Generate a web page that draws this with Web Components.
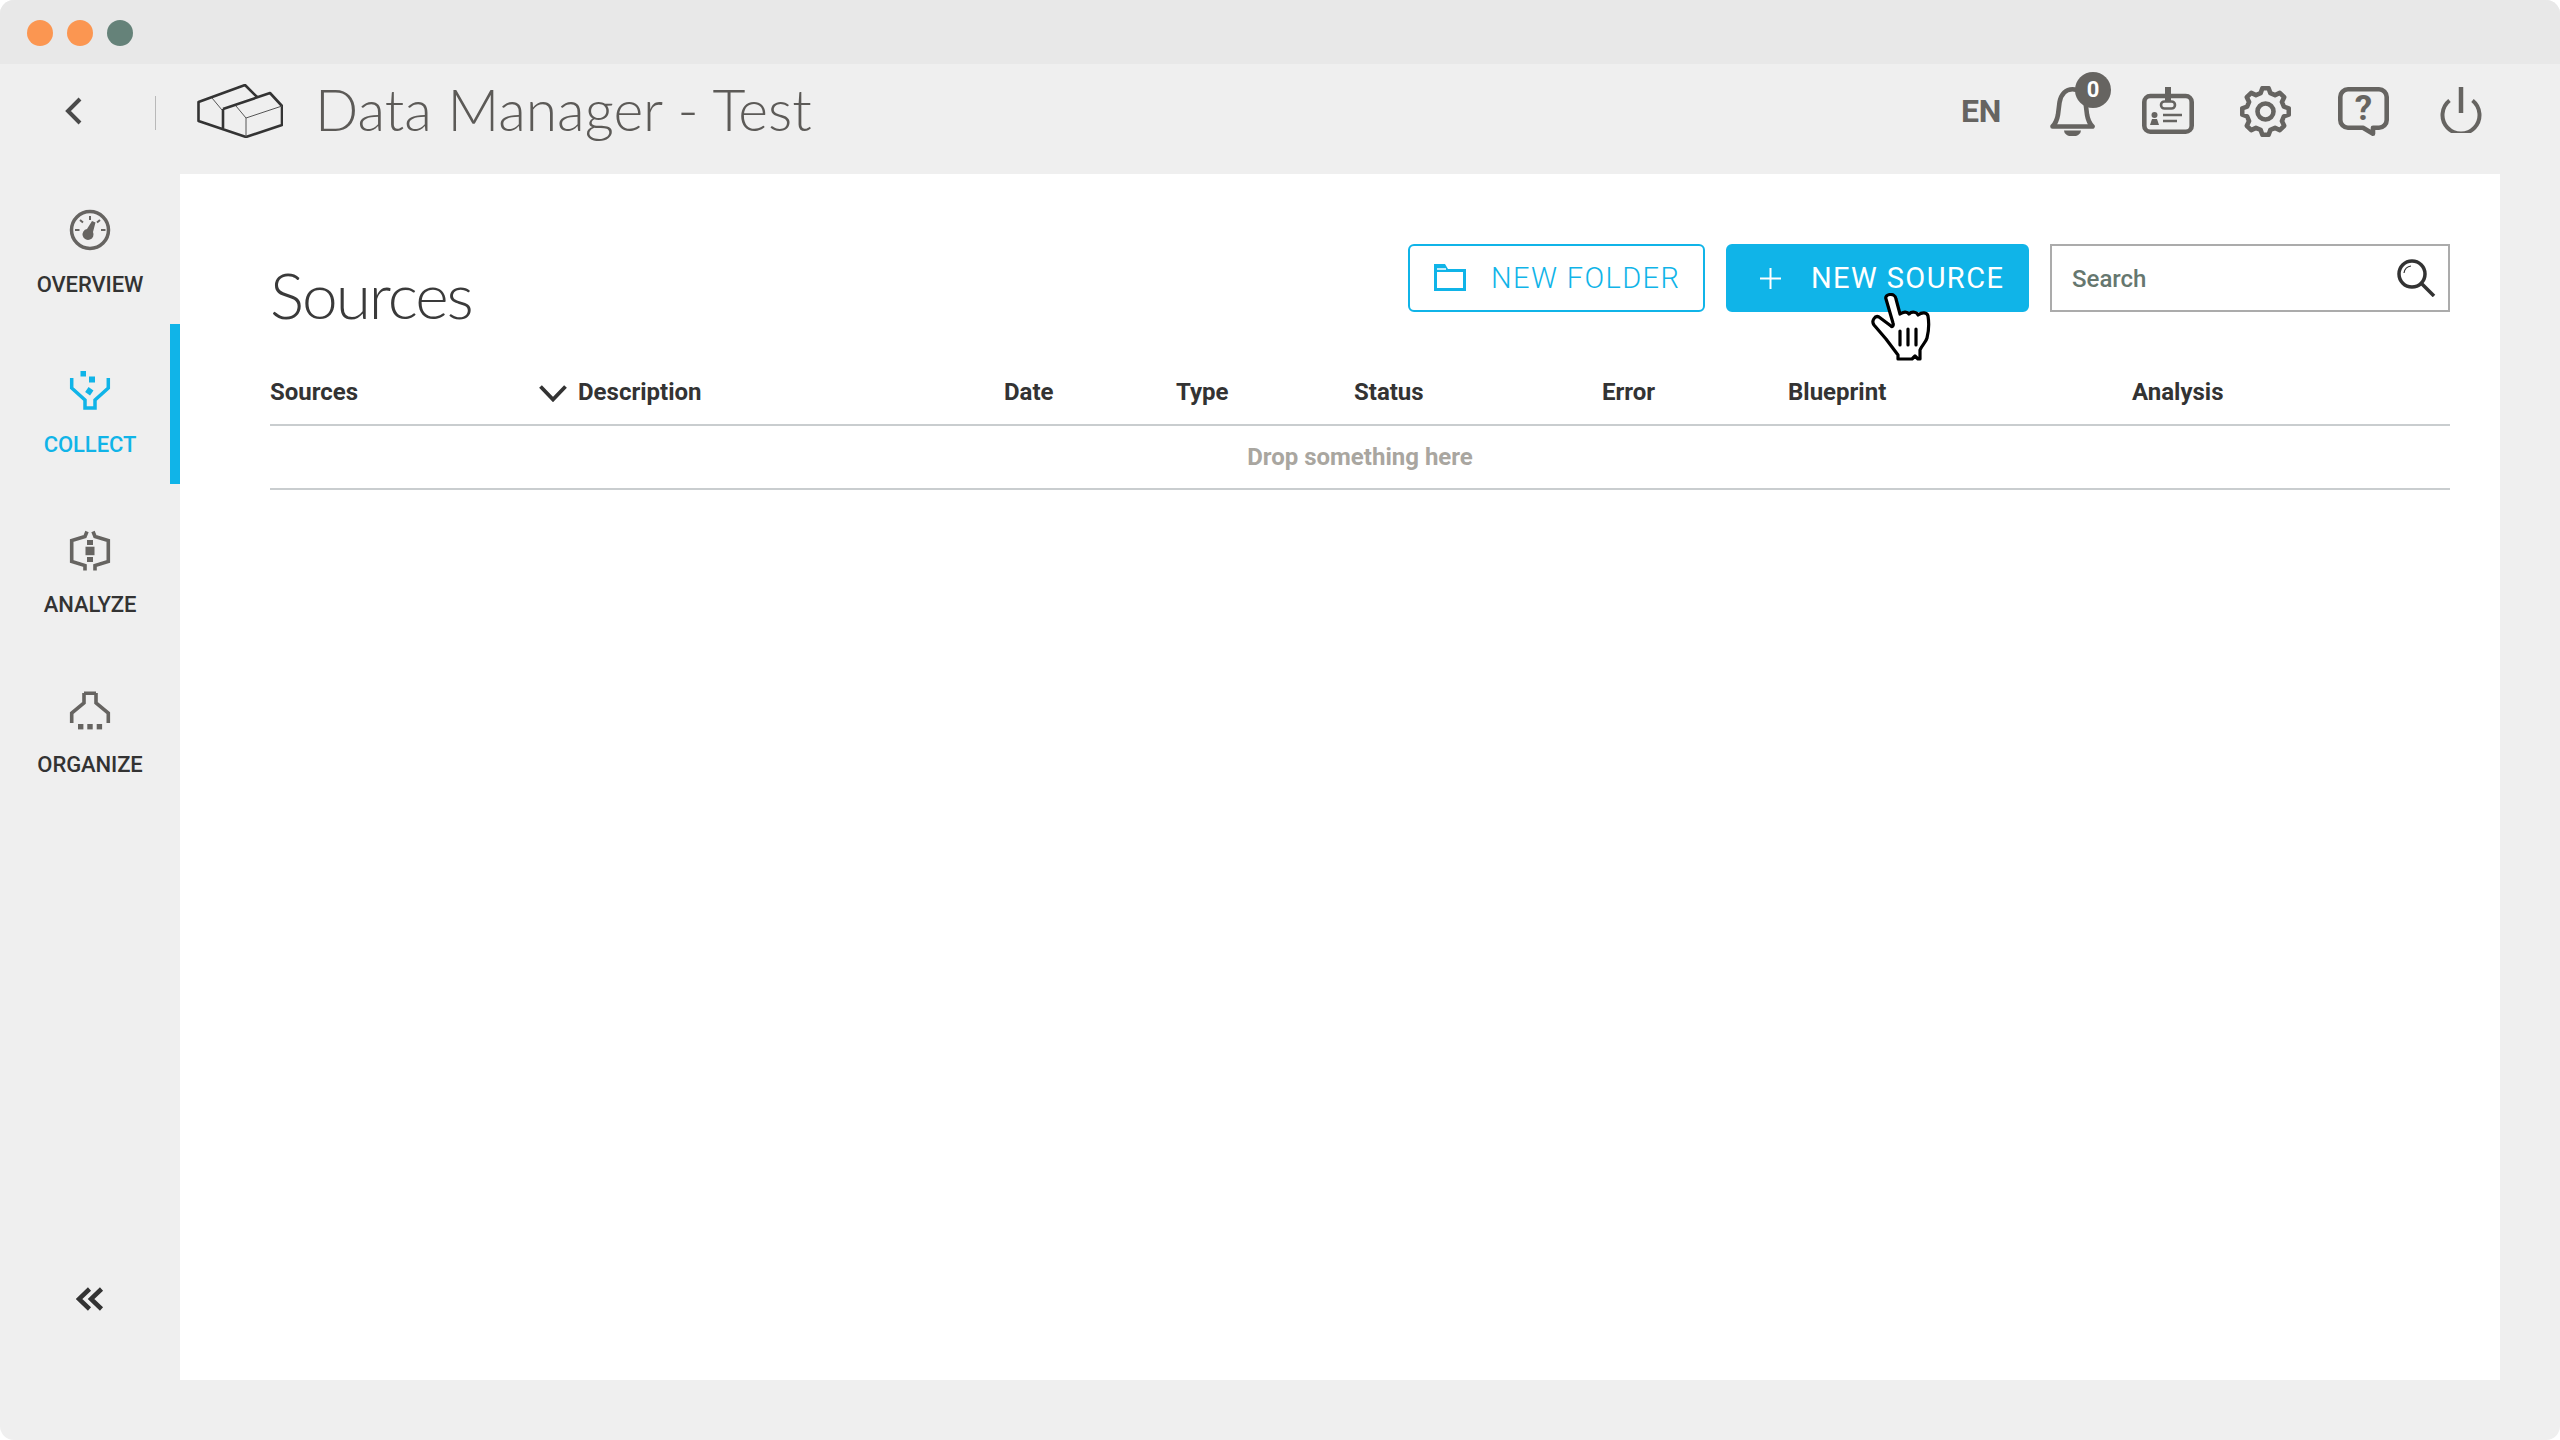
<!DOCTYPE html>
<html lang="en"><head><meta charset="utf-8"><title>Data Manager - Test</title>
<style>html,body{margin:0;padding:0;background:#fff}body{font-family:Roboto,sans-serif}</style></head>
<body>
<app-window>
  <window-bar></window-bar>
  <app-header title-text="Data Manager - Test"></app-header>
  <side-nav>
    <nav-item icon="overview">OVERVIEW</nav-item>
    <nav-item icon="collect" active>COLLECT</nav-item>
    <nav-item icon="analyze">ANALYZE</nav-item>
    <nav-item icon="organize">ORGANIZE</nav-item>
  </side-nav>
  <content-card>
    <page-toolbar heading="Sources">
      <action-button icon="folder">NEW FOLDER</action-button>
      <action-button icon="plus" primary>NEW SOURCE</action-button>
      <search-box></search-box>
    </page-toolbar>
    <data-table></data-table>
  </content-card>
</app-window>
<script>
const def=(n,html,init)=>customElements.define(n,class extends HTMLElement{connectedCallback(){if(this.shadowRoot)return;const r=this.attachShadow({mode:'open'});r.innerHTML=typeof html==='function'?html(this):html;}});
const GREY='#666461', BLUE='#10B4E8';
function gearPath(cx,cy,R,r,n){let d='';const st=Math.PI*2/n;for(let i=0;i<n;i++){const a=i*st-Math.PI/2;const p=[[a-st*.17,R],[a+st*.17,R],[a+st*.33,r],[a+st*.67,r]];p.forEach(([t,q],j)=>{d+=((i===0&&j===0)?'M':'L')+(cx+q*Math.cos(t)).toFixed(2)+' '+(cy+q*Math.sin(t)).toFixed(2);});}return d+'Z';}

def('app-window',`<style>:host{display:grid;grid-template-columns:180px 1fr;grid-template-rows:64px 100px 1fr;width:2560px;height:1440px;background:#EFEFEF;border-radius:14px;overflow:hidden;color:#333}
::slotted(window-bar),::slotted(app-header){grid-column:1/3}</style><slot></slot>`);

def('window-bar',`<style>:host{display:flex;align-items:center;gap:14px;padding-left:27px;background:#E8E8E8}
i{width:26px;height:26px;border-radius:50%;display:block;margin-top:2px}</style>
<i style="background:#FB9651"></i><i style="background:#FB9651"></i><i style="background:#658279"></i>`);

def('app-header',el=>`<style>:host{display:flex;align-items:flex-start;height:100px;color:${GREY}}
.back{margin:33px 0 0 65px;width:17px;height:28px;display:block}
.div{margin:32px 0 0 73px;width:1px;height:34px;background:#b9b9b9}
.logo{margin:20px 0 0 41px;width:86px;height:54px;display:block}
h1{margin:7px 0 0 32px;font:300 57px/76px Lato,sans-serif;color:#5C5A57;white-space:nowrap}
.r{margin-left:auto;margin-right:78px;display:flex;align-items:flex-start}
.en{margin-top:30px;font:700 32px/34px Roboto,sans-serif;width:38px;color:${GREY};letter-spacing:-.3px;margin-left:-1px}
svg{display:block}
.bell{position:relative;margin:23px 0 0 51px;width:45px;height:49px}
.badge{position:absolute;left:25px;top:-15px;width:36px;height:36px;border-radius:50%;background:${GREY};color:#fff;font:700 22px/36px Roboto,sans-serif;text-align:center}
</style>
<svg class="back" viewBox="0 0 17 28"><path d="M15 2 3 14l12 12" fill="none" stroke="#4a4a4a" stroke-width="4"/></svg>
<span class="div"></span>
<svg class="logo" viewBox="0 0 86 54" fill="none" stroke="#333">
<path d="M26 25V46M60 13 48 1 1.500 18V37L49 53 85 41V22L73 9 26 25" stroke-width="2.600" stroke-linejoin="round"/>
<path d="M15 14 25 26M39 22 49 34 85 22M49 34V53" stroke-width="1" stroke="#555"/></svg>
<h1>${el.getAttribute('title-text')}</h1>
<div class="r">
<span class="en">EN</span>
<div class="bell"><svg width="45" height="49" viewBox="0 0 45 49" fill="none" stroke="${GREY}" stroke-width="4.600"><path d="M2.500 39.500c3-3 4.500-6 5.500-12l1.500-12C11 7 16 2.300 22.500 2.300S34 7 35.500 15.500l1.500 12c1 6 2.500 9 5.500 12Z" stroke-linejoin="round"/><path d="M14 43.500a8.500 6 0 0 0 17 0Z" fill="${GREY}" stroke="none"/></svg><span class="badge">0</span></div>
<svg style="margin:23px 0 0 47px" width="52" height="47" viewBox="0 0 52 47" fill="none" stroke="${GREY}" stroke-width="4.600"><rect x="2.300" y="9" width="47.400" height="35.700" rx="6"/><rect x="23" y="0" width="6" height="14" fill="${GREY}" stroke="none"/><rect x="19" y="14.500" width="14" height="7" rx="3.500" stroke-width="2.600" fill="#EFEFEF"/><circle cx="12.500" cy="28" r="3" fill="${GREY}" stroke="none"/><path d="M8 38l2-6h5l2 6Z" fill="${GREY}" stroke="none"/><path d="M21 28h19M21 34h14" stroke-width="2.600"/></svg>
<svg style="margin:22px 0 0 46px" width="51" height="51" viewBox="0 0 51 51" fill="none" stroke="${GREY}" stroke-width="4.600"><path d="${gearPath(25.5,25.5,23.5,19,8)}" stroke-linejoin="round"/><circle cx="25.500" cy="25.500" r="8"/></svg>
<svg style="margin:23px 0 0 47px" width="51" height="50" viewBox="0 0 51 50" fill="none" stroke="${GREY}" stroke-width="4.600"><path d="M10 2.300h31a7.700 7.700 0 0 1 7.700 7.700v23a7.700 7.700 0 0 1-7.700 7.700h-6v6l-10-6H10A7.700 7.700 0 0 1 2.300 33V10A7.700 7.700 0 0 1 10 2.300Z" stroke-linejoin="round"/><text x="25.500" y="33" text-anchor="middle" font-family="Roboto" font-weight="700" font-size="35" fill="${GREY}" stroke="none">?</text></svg>
<svg style="margin:23px 0 0 51px" width="42" height="46" viewBox="0 0 42 46" fill="none" stroke="${GREY}" stroke-width="4"><path d="M21 0v26" stroke-width="4.500"/><path d="M9.500 13.500a18.500 18.500 0 1 0 23 0"/></svg>
</div>`);

def('side-nav',`<style>:host{display:flex;flex-direction:column;min-height:0}
.c{margin:auto 0 129px;display:flex;justify-content:center}
svg{display:block}</style><slot></slot>
<div class="c"><svg width="28" height="24" viewBox="0 0 28 24" fill="none" stroke="#333" stroke-width="4.500"><path d="M13.500 2 3 12l10.500 10M25.500 2 15 12l10.500 10"/></svg></div>`);

const navIcons={
overview:c=>`<circle cx="22" cy="22" r="18.500" stroke-width="3.500"/><path d="M22 8v4M7 22h4.500M33 22h4.500M12 12l3 2.500M32 12l-3 2.500" stroke-width="2"/><path d="M24 13l3.500 1.500-2.500 9.500a5.500 5.500 0 1 1-6-3Z" fill="${c}" stroke="none"/>`,
collect:c=>`<path d="M3.700 10v10L17 32v8h10v-8l13.300-12V10" stroke-width="3.500"/><g fill="${c}" stroke="none"><rect x="12.500" y="3" width="5.500" height="5.500"/><rect x="21" y="8.500" width="6" height="6"/><rect x="18.300" y="20.300" width="6" height="6" transform="rotate(35 21.300 23.300)"/></g>`,
analyze:c=>`<path d="M19 3.500l-2 5-13.300 4v21L17 37.500v5M25 3.500l2 5 13.300 4v21L27 37.500v5" stroke-width="3.600"/><g fill="${c}" stroke="none"><rect x="19" y="12" width="6" height="5"/><rect x="17.500" y="18.700" width="9" height="8.500"/><rect x="19" y="29" width="6" height="5"/></g>`,
organize:c=>`<path d="M16 5.300h12M16 5v10L3.700 25v10M28 5v10l12.300 10v10" stroke-width="3.600"/><g fill="${c}" stroke="none"><rect x="10" y="36" width="5.400" height="5.400"/><rect x="19.300" y="36" width="5.400" height="5.400"/><rect x="28.700" y="36" width="5.400" height="5.400"/></g>`};
def('nav-item',el=>{const a=el.hasAttribute('active');const c=a?BLUE:GREY;return `<style>:host{display:block;box-sizing:border-box;height:160px;padding-top:44px;text-align:center;font:500 22px/26px Roboto,sans-serif;letter-spacing:-.1px;color:${a?BLUE:'#333'};${a?`border-right:10px solid ${BLUE};`:''}}
svg{display:block;margin:0 auto 20px;width:44px;height:44px}
.in{width:180px}</style><div class="in"><svg viewBox="0 0 44 44" fill="none" stroke="${c}">${navIcons[el.getAttribute('icon')](c)}</svg><slot></slot></div>`});

def('content-card',`<style>:host{display:block;background:#fff;margin:10px 60px 60px 0;padding:70px 50px 0 90px;position:relative;min-width:0}</style><slot></slot>`);

def('page-toolbar',el=>`<style>:host{display:flex;align-items:flex-start;height:68px}
h2{margin:17px auto 0 0;font:300 64px/68px Lato,sans-serif;letter-spacing:-2px;color:#3a3a3a;white-space:nowrap}
.a{display:flex;gap:21px}</style><h2>${el.getAttribute('heading')}</h2><div class="a"><slot></slot></div>`);

const btnIcons={
folder:`<svg style="margin-left:-1px;margin-top:-2px" width="32" height="27" viewBox="0 0 32 27" fill="none" stroke="${BLUE}"><path d="M0 0h11l3 5h18v22H0Z" fill="${BLUE}" stroke="none"/><path d="M3 8h26v16H3Z" fill="#fff" stroke="none"/><path d="M3 5h9" stroke="#fff" stroke-width="1.500"/></svg>`,
plus:`<svg width="21" height="21" viewBox="0 0 21 21" fill="none" stroke="#fff" stroke-width="2"><path d="M10.500 0v21M0 10.500h21"/></svg>`};
def('action-button',el=>{const p=el.hasAttribute('primary');return `<style>:host{display:flex;align-items:center;box-sizing:border-box;height:68px;border:2px solid ${BLUE};border-radius:6px;background:${p?BLUE:'#fff'};color:${p?'#fff':BLUE};font:${p?400:300} 29px/34px Roboto,sans-serif;letter-spacing:1.400px;white-space:nowrap;
width:${p?303:297}px;padding-left:${p?32:25}px;gap:${p?30:25}px}
svg{display:block;flex:none}</style>${btnIcons[el.getAttribute('icon')]}<span><slot></slot></span>`});

def('search-box',`<style>:host{display:flex;align-items:center;justify-content:space-between;box-sizing:border-box;width:400px;height:68px;border:2px solid #ABABAB;padding:2px 12px 0 20px;font:500 24px/30px Roboto,sans-serif;color:#66776F}
svg{display:block;margin-top:-2px}</style><span>Search</span>
<svg width="40" height="38" viewBox="0 0 40 38" fill="none" stroke="#333"><circle cx="16" cy="15" r="13" stroke-width="3.500"/><path d="M26 25l12 12" stroke-width="3.500"/><path d="M8 14a8 8 0 0 1 7-7" stroke-width="1.200"/></svg>`);

def('data-table',`<style>:host{display:block;margin-top:0;font:700 24px/30px Roboto,sans-serif;color:#333}
.h{display:grid;grid-template-columns:269px 39px 426px 172px 177px 249px 186px 343px 1fr;height:114px;box-sizing:border-box;padding-top:65px;border-bottom:2px solid #C9CDCF;align-items:start}
.row{height:64px;box-sizing:border-box;border-bottom:2px solid #C9CDCF;text-align:center;color:#A9A6A0;line-height:62px;font-weight:700}
svg{display:block;margin-top:8px}
.st{padding-left:1px}</style>
<div class="h"><span>Sources</span><svg width="28" height="17" viewBox="0 0 28 17" fill="none" stroke="#333" stroke-width="3.800"><path d="M1.500 1.500 14 14.500 26.500 1.500"/></svg><span>Description</span><span>Date</span><span>Type</span><span class="st">Status</span><span>Error</span><span>Blueprint</span><span class="st">Analysis</span></div>
<div class="row">Drop something here</div>
<mouse-cursor></mouse-cursor>`);

def('mouse-cursor',`<style>:host{position:absolute;left:1689px;top:119px;display:block;width:68px;height:72px;z-index:5}svg{display:block}</style>
<svg width="68" height="72" viewBox="0 0 68 72" fill="#fff" stroke="#000" stroke-width="3.200" stroke-linejoin="round" stroke-linecap="round"><path d="M17 6c-2-5 9-7 10 0l4 15c3-2 7-3 9 0 3-3 8-2 9 1 4-3 9-3 10 1 1 6 1 14-1 22-1 4-5 7-7 12v9H49l-3-3-3 3H29v-4L17 46 5 32c-3-4 1-10 5-8l12 9c1 1 3 0 2-3Z"/><path d="M31 38v14M39 36v16M47 36v16" fill="none" stroke-width="3.200"/></svg>`);
</script>
</body></html>
